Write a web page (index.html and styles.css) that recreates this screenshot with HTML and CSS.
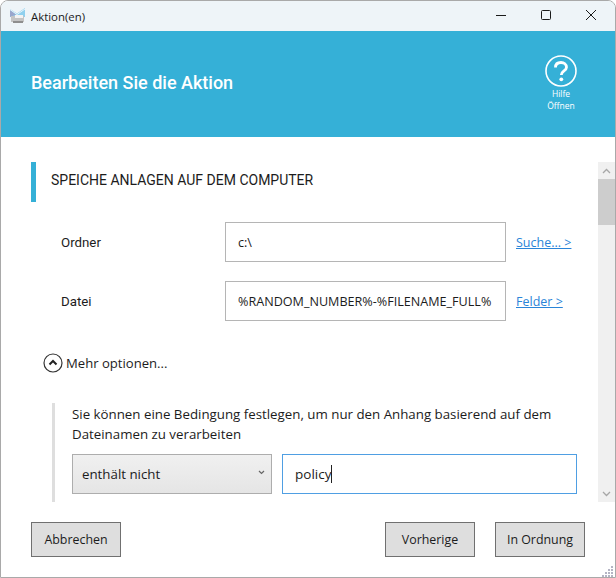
FILE: index.html
```html
<!DOCTYPE html>
<html lang="de">
<head>
<meta charset="utf-8">
<title>Aktion(en)</title>
<link rel="stylesheet" href="styles.css">
</head>
<body>
<div class="window">
  <div class="titlebar">
    <svg class="appicon" width="17" height="16" viewBox="0 0 17 16">
      <path d="M1 1 8 5.500 16 0V9H1Z" fill="#8fd0ee"/>
      <path d="M1 2 7 6.500 1 9Z" fill="#9aa6cc"/>
      <path d="M1 1.500 8 6.500 16 1" fill="none" stroke="#e8f4fa" stroke-width="1"/>
      <rect x="2" y="8" width="13" height="6" fill="#c4c4c4"/>
      <rect x="6" y="7" width="8" height="3" fill="#f2f2f2"/>
      <rect x="4" y="13" width="10" height="2" fill="#8e8e8e"/>
    </svg>
    <span class="apptitle">Aktion(en)</span>
    <div class="winctrls">
      <svg width="10" height="10" viewBox="0 0 10 10"><path d="M0 5.5H10" stroke="#1a1a1a" fill="none"/></svg>
      <svg width="10" height="10" viewBox="0 0 10 10"><rect x=".5" y=".5" width="9" height="9" rx="1" stroke="#1a1a1a" fill="none"/></svg>
      <svg width="10" height="10" viewBox="0 0 10 10"><path d="M0 0 10 10M10 0 0 10" stroke="#1a1a1a" fill="none"/></svg>
    </div>
  </div>
  <header class="banner">
    <h1 class="heading">Bearbeiten Sie die Aktion</h1>
    <div class="help">
      <svg width="32" height="32" viewBox="0 0 32 32">
        <circle cx="16" cy="16" r="15" fill="none" stroke="#fff" stroke-width="1.6"/>
        <path d="M10.5 12.5C10.5 9 13 7.5 16 7.5S21.500 9.300 21.500 12.300C21.500 16 16.300 16 16.300 20" fill="none" stroke="#fff" stroke-width="2.800"/>
        <circle cx="16.300" cy="24.300" r="1.900" fill="#fff"/>
      </svg>
      <span class="helptext">Hilfe<br>Öffnen</span>
    </div>
  </header>
  <main class="body">
    <div class="scrollarea">
      <div class="content">
        <h2 class="section">SPEICHE ANLAGEN AUF DEM COMPUTER</h2>
        <div class="row">
          <label class="rowlabel">Ordner</label>
          <div class="field">c:\</div>
          <a class="link">Suche... &gt;</a>
        </div>
        <div class="row">
          <label class="rowlabel">Datei</label>
          <div class="field">%RANDOM_NUMBER%-%FILENAME_FULL%</div>
          <a class="link">Felder &gt;</a>
        </div>
        <div class="more">
          <svg width="20" height="20" viewBox="0 0 20 20">
            <circle cx="10" cy="10" r="9" fill="none" stroke="#333" stroke-width="1.200"/>
            <path d="M6.500 11.500 10 8 13.500 11.500" fill="none" stroke="#222" stroke-width="2"/>
          </svg>
          <span>Mehr optionen...</span>
        </div>
        <div class="cond">
          <p class="condtext">Sie können eine Bedingung festlegen, um nur den Anhang basierend auf dem Dateinamen zu verarbeiten</p>
          <div class="condrow">
            <div class="select">
              <span>enthält nicht</span>
              <svg class="chev" width="7" height="5" viewBox="0 0 7 5"><path d="M1 1 3.500 3.500 6 1" fill="none" stroke="#666" stroke-width="1.200"/></svg>
            </div>
            <div class="input"><span>policy</span><i class="caret"></i></div>
          </div>
        </div>
      </div>
      <div class="scrollbar">
        <div class="arrow"><svg width="9" height="6" viewBox="0 0 9 6"><path d="M1 5 4.500 1.500 8 5" fill="none" stroke="#a6a6a6" stroke-width="1.300"/></svg></div>
        <div class="thumb"></div>
        <div class="track"></div>
        <div class="arrow"><svg width="9" height="6" viewBox="0 0 9 6"><path d="M1 1 4.500 4.500 8 1" fill="none" stroke="#a6a6a6" stroke-width="1.300"/></svg></div>
      </div>
    </div>
    <footer class="footer">
      <button class="btn">Abbrechen</button>
      <span class="spacer"></span>
      <button class="btn">Vorherige</button>
      <button class="btn">In Ordnung</button>
    </footer>
    <svg class="grip" width="12" height="12" viewBox="0 0 12 12" fill="#b4b4c4">
      <rect x="9" y="1" width="2" height="2"/>
      <rect x="6" y="4" width="2" height="2"/><rect x="9" y="4" width="2" height="2"/>
      <rect x="3" y="7" width="2" height="2"/><rect x="6" y="7" width="2" height="2"/><rect x="9" y="7" width="2" height="2"/>
      <rect x="0" y="10" width="2" height="2"/><rect x="3" y="10" width="2" height="2"/><rect x="6" y="10" width="2" height="2"/><rect x="9" y="10" width="2" height="2"/>
    </svg>
  </main>
</div>
</body>
</html>
```

FILE: styles.css
```css
html, body { margin: 0; padding: 0; background: #fff; }
.window {
  width: 616px; height: 578px; box-sizing: border-box;
  border: 1px solid #a9a9a9; border-radius: 8px 8px 0 0;
  display: flex; flex-direction: column; overflow: hidden;
  font-family: "Open Sans", "Noto Sans", sans-serif; font-size: 13.300px; color: #1c1c1c;
}
.titlebar {
  height: 30px; flex: none; background: #eef4f8;
  display: flex; align-items: center; padding-left: 8px;
}
.appicon { margin-right: 5px; }
.apptitle { font-size: 11.400px; color: #1a1a1a; }
.winctrls { margin-left: auto; display: flex; gap: 35px; padding: 0 19px 2px 0; align-items: center; }
.banner {
  height: 106px; flex: none; background: #35b0d7; color: #fff;
  display: flex; align-items: center; justify-content: space-between;
  padding: 0 38px 0 30px;
}
.heading { margin: 0 0 3px; font: 500 18px Roboto, sans-serif; }
.help { display: flex; flex-direction: column; align-items: center; margin-bottom: 1px; }
.helptext { font-size: 8.500px; line-height: 12px; text-align: center; margin-top: 1px; }
.body { flex: 1; display: flex; flex-direction: column; min-height: 0; position: relative; }
.scrollarea { height: 340px; margin-top: 25px; display: flex; flex: none; }
.content { flex: 1; overflow: hidden; padding-left: 30px; min-width: 0; }
.section {
  margin: 0; height: 40px; border-left: 5px solid #35b0d7; padding: 0 0 4px 15px; box-sizing: border-box;
  display: flex; align-items: center; font: 400 14px Roboto, sans-serif; color: #1c1c1c;
}
.row { display: flex; align-items: center; margin-top: 20px; height: 40px; }
.row + .row { margin-top: 19px; }
.rowlabel { width: 194px; padding-left: 30px; flex: none; box-sizing: border-box; font: 400 13.300px Roboto, sans-serif; }
.field {
  width: 281px; height: 40px; box-sizing: border-box; border: 1px solid #b5b5b5;
  display: flex; align-items: center; padding-left: 12px; white-space: nowrap; font-size: 12.600px;
}
.link { margin-left: 10px; color: #2a84d8; text-decoration: underline; font-size: 12.500px; }
.more { display: flex; align-items: center; gap: 3px; margin: 32px 0 0 12px; height: 20px; font-size: 13.100px; }
.cond { margin: 30px 0 0 21px; border-left: 3px solid #dedede; padding-left: 17px; height: 99px; }
.condtext { margin: 0; line-height: 20px; width: 490px; padding-top: 1px; }
.condrow { display: flex; gap: 10px; margin-top: 10px; }
.select {
  width: 200px; height: 40px; box-sizing: border-box; border: 1px solid #adadad;
  background: linear-gradient(#f0f0f0, #e5e5e5);
  display: flex; align-items: center; justify-content: space-between; padding: 0 6px 0 9px;
}
.chev { margin-bottom: 3px; }
.input {
  width: 295px; height: 40px; box-sizing: border-box; border: 1px solid #4f9fe3;
  display: flex; align-items: center; padding-left: 12px; font-size: 13.500px;
}
.caret { display: block; width: 1px; height: 18px; background: #222; }
.scrollbar { width: 17px; flex: none; display: flex; flex-direction: column; background: #f0f0f0; }
.arrow { height: 17px; display: flex; align-items: center; justify-content: center; }
.thumb { height: 46px; background: #cdcdcd; }
.track { flex: 1; }
.footer { display: flex; align-items: center; gap: 20px; padding: 20px 30px 0 30px; }
.spacer { flex: 1; }
.btn {
  width: 90px; height: 35px; box-sizing: border-box; border: 1px solid #707070; background: #dedede;
  font: 400 12.400px "Open Sans", sans-serif; color: #1c1c1c; padding: 0;
}
.grip { position: absolute; right: 1px; bottom: 0; }
```
